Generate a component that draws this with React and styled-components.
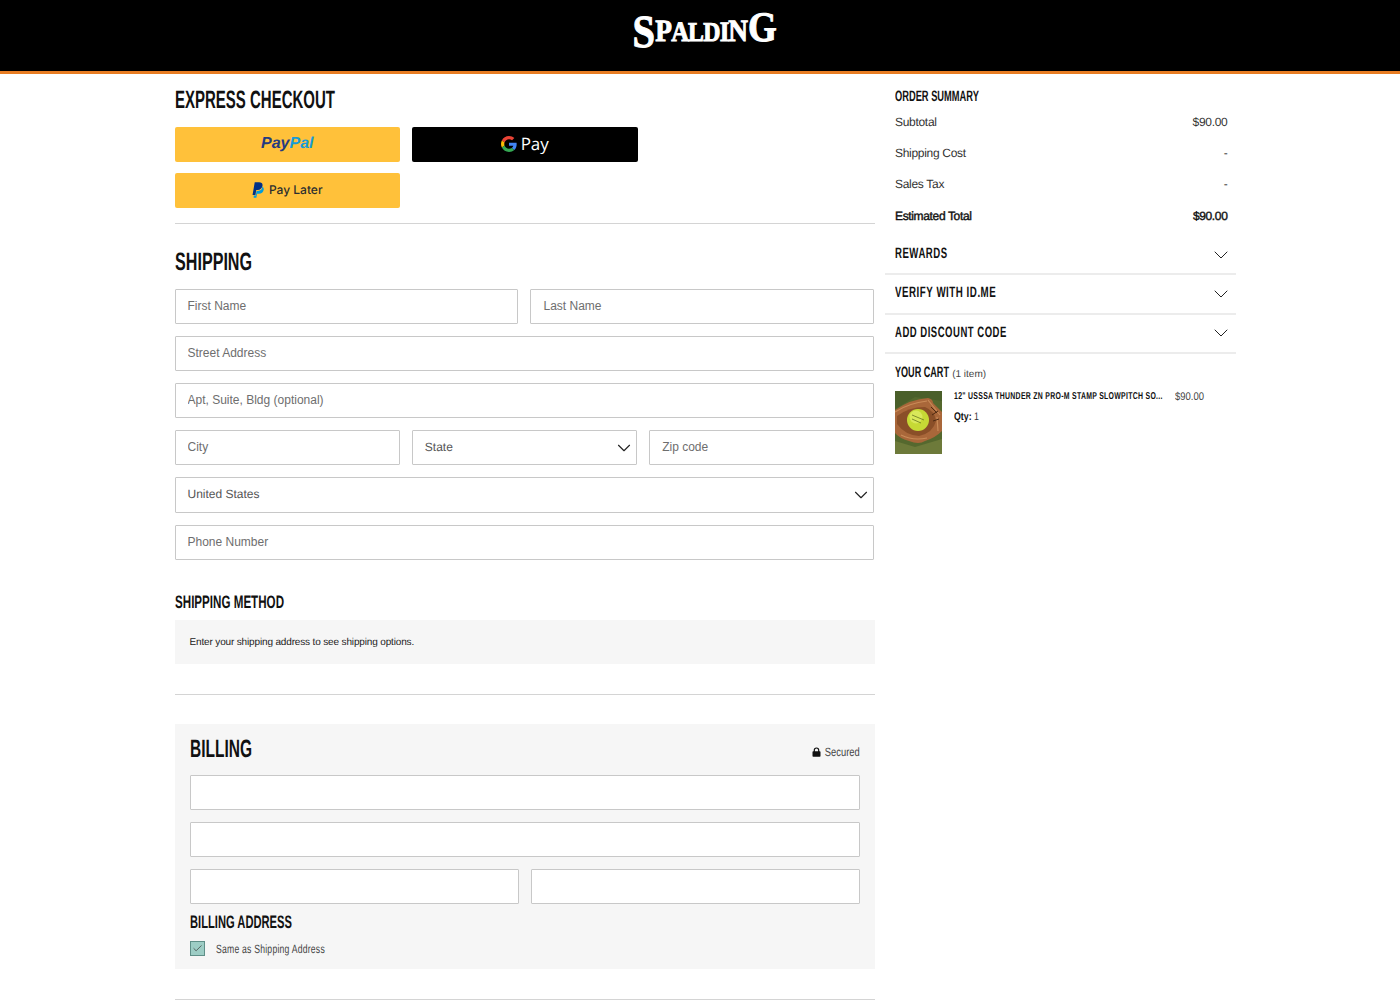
import React from 'react'
import styled, { createGlobalStyle } from 'styled-components'
import { ChevronDown, Check } from 'lucide-react'

const GlobalStyle = createGlobalStyle`
  * { box-sizing: border-box; }
  html, body { margin: 0; background: #fff; }
  body {
    font-family: "Liberation Sans", Arial, sans-serif;
    color: #333;
    overflow: hidden;
    height: 1000px;
    text-rendering: geometricPrecision;
  }
`

function GoogleG() {
    return (
        <svg width="16" height="16" viewBox="0 0 48 48">
            <path fill="#EA4335" d="M24 9.5c3.5 0 6.700 1.200 9.200 3.600l6.900-6.900C35.900 2.400 30.500 0 24 0 14.600 0 6.500 5.400 2.600 13.200l8 6.200C12.500 13.700 17.800 9.500 24 9.500z" />
            <path fill="#4285F4" d="M47 24.500c0-1.600-.1-3.100-.4-4.500H24v9h13c-.6 3-2.300 5.500-4.800 7.200l7.700 6C44.400 38 47 31.800 47 24.500z" />
            <path fill="#FBBC05" d="M10.600 28.600c-.5-1.400-.8-3-.8-4.600s.3-3.200.8-4.600l-8-6.200C.9 16.500 0 20.100 0 24s.9 7.500 2.600 10.800l8-6.200z" />
            <path fill="#34A853" d="M24 48c6.500 0 11.900-2.100 15.900-5.800l-7.700-6c-2.200 1.400-4.900 2.300-8.200 2.300-6.200 0-11.500-4.200-13.400-9.900l-8 6.200C6.500 42.600 14.600 48 24 48z" />
        </svg>
    )
}

function PayPalMark() {
    return (
        <svg width="12" height="16" viewBox="0 0 22 28">
            <path fill="#009cde" d="M19 7c.4 4.800-2.800 9-8 9H8.400L7 24H3.200L3 28h5l1.200-7h3c5.300 0 8.700-3.200 9.300-8 .3-1.700-.6-4.100-2.500-6z" />
            <path fill="#003087" d="M5 0h8c4.600 0 7 2.300 6.200 6.400C18.300 11.500 15 14 10.500 14H7.800L6.300 23H1z" />
        </svg>
    )
}

function LockIcon() {
    return (
        <svg width="9" height="10" viewBox="0 0 9 10">
            <path fill="none" stroke="#111" strokeWidth="1.200" d="M2.300 5V3.200a2.200 2.200 0 0 1 4.400 0V5" />
            <rect x=".5" y="4.200" width="8" height="5.600" rx=".8" fill="#111" />
        </svg>
    )
}

function Softball() {
    return (
        <svg width="47" height="63" viewBox="0 0 47 63">
            <rect width="47" height="63" fill="#55682e" />
            <path fill="#4a5f2a" d="M0 0h47v10L20 6 0 18z" />
            <path fill="#6d7a3a" d="M0 50l20 6 27-8v15H0z" />
            <path fill="#a9673a" d="M0 19 Q16 8 33 7 Q38 8 38 12 L47 21 L47 40 Q40 47 30 50 Q24 54 14 50 Q4 47 0 42z" />
            <path fill="#8a4f28" d="M2 25 Q14 16 30 16 Q40 20 41 30 Q38 42 24 45 Q10 44 2 33z" />
            <path fill="none" stroke="#c98b58" strokeWidth="1.200" d="M0 21 Q14 12 32 10 M33 9 L45 24 M42 26 L43 40 M6 44 Q18 50 32 47" />
            <path fill="none" stroke="#4f2a12" strokeWidth="1" d="M36 16 L42 22 M37 24 L43 20 M38 30 L44 28" />
            <circle cx="23" cy="29" r="11" fill="#c6d935" />
            <circle cx="21" cy="26" r="6.500" fill="#d9e85a" />
            <path fill="none" stroke="#66731f" strokeWidth=".8" d="M17 24 L29 29 M17 28 L26 32" />
        </svg>
    )
}

function Field({ label }) {
    return <Input placeholder={label} />
}

function SelectField({ label, tall }) {
    return (
        <SelectBox $tall={tall}>
            <SelectLabel>{label}</SelectLabel>
            <ChevronDown size={22} strokeWidth={1.25} color="#222" />
        </SelectBox>
    )
}

function App() {
    return (
        <>
            <GlobalStyle />
            <Header>
                <Logo>
                    <LogoLetter $size={46} $drop={6}>S</LogoLetter>
                    <LogoLetter $size={31}>P</LogoLetter>
                    <LogoLetter $size={28}>A</LogoLetter>
                    <LogoLetter $size={27}>L</LogoLetter>
                    <LogoLetter $size={27}>D</LogoLetter>
                    <LogoLetter $size={28}>I</LogoLetter>
                    <LogoLetter $size={31}>N</LogoLetter>
                    <LogoLetter $size={42}>G</LogoLetter>
                </Logo>
            </Header>
            <Page>
                <Main>
                    <Title><Squeeze $x={0.6}>EXPRESS CHECKOUT</Squeeze></Title>
                    <ExpressGrid>
                        <PayButton><PayPalWord>Pay<span>Pal</span></PayPalWord></PayButton>
                        <PayButton $dark><GoogleG /><GPayWord>Pay</GPayWord></PayButton>
                        <PayButton $wide><PayPalMark /><LaterWord>Pay Later</LaterWord></PayButton>
                    </ExpressGrid>
                    <Rule />
                    <ShippingTitle><Squeeze $x={0.645}>SHIPPING</Squeeze></ShippingTitle>
                    <FormGrid>
                        <Cell $span={3}><Field label="First Name" /></Cell>
                        <Cell $span={3}><Field label="Last Name" /></Cell>
                        <Cell $span={6}><Field label="Street Address" /></Cell>
                        <Cell $span={6}><Field label="Apt, Suite, Bldg (optional)" /></Cell>
                        <Cell $span={2}><Field label="City" /></Cell>
                        <Cell $span={2}><SelectField label="State" /></Cell>
                        <Cell $span={2}><Field label="Zip code" /></Cell>
                        <Cell $span={6}><SelectField label="United States" tall /></Cell>
                        <Cell $span={6}><Field label="Phone Number" /></Cell>
                    </FormGrid>
                    <SubTitle><Squeeze $x={0.645}>SHIPPING METHOD</Squeeze></SubTitle>
                    <MethodBox>Enter your shipping address to see shipping options.</MethodBox>
                    <Rule $gap={30} />
                    <BillingCard>
                        <BillingHead>
                            <BillingTitle><Squeeze $x={0.62}>BILLING</Squeeze></BillingTitle>
                            <Secured><LockIcon /><SecuredText>Secured</SecuredText></Secured>
                        </BillingHead>
                        <FormGrid>
                            <Cell $span={6}><Input /></Cell>
                            <Cell $span={6}><Input /></Cell>
                            <Cell $span={3}><Input /></Cell>
                            <Cell $span={3}><Input /></Cell>
                        </FormGrid>
                        <BillingAddress><Squeeze $x={0.62}>BILLING ADDRESS</Squeeze></BillingAddress>
                        <CheckRow>
                            <CheckBox><Check size={11} strokeWidth={1.5} color="#333" /></CheckBox>
                            <CheckLabel><Squeeze $x={0.72}>Same as Shipping Address</Squeeze></CheckLabel>
                        </CheckRow>
                    </BillingCard>
                    <Rule $gap={30} />
                </Main>
                <Side>
                    <SummaryTitle><Squeeze $x={0.62}>ORDER SUMMARY</Squeeze></SummaryTitle>
                    <SummaryRow><span>Subtotal</span><span>$90.00</span></SummaryRow>
                    <SummaryRow><span>Shipping Cost</span><span>-</span></SummaryRow>
                    <SummaryRow><span>Sales Tax</span><span>-</span></SummaryRow>
                    <SummaryRow $total><span>Estimated Total</span><span>$90.00</span></SummaryRow>
                    <AccordionList>
                        <Accordion><Squeeze $x={0.64}>REWARDS</Squeeze><ChevronDown size={24} strokeWidth={1} color="#222" /></Accordion>
                        <Accordion><Squeeze $x={0.65}>VERIFY WITH ID.ME</Squeeze><ChevronDown size={24} strokeWidth={1} color="#222" /></Accordion>
                        <Accordion><Squeeze $x={0.635}>ADD DISCOUNT CODE</Squeeze><ChevronDown size={24} strokeWidth={1} color="#222" /></Accordion>
                    </AccordionList>
                    <CartTitle><CartSqueeze $x={0.605}>YOUR CART</CartSqueeze><small>(1 item)</small></CartTitle>
                    <CartItem>
                        <Softball />
                        <ItemBody>
                            <ItemName><Squeeze $x={0.69}>12" USSSA THUNDER ZN PRO-M STAMP SLOWPITCH SO...</Squeeze></ItemName>
                            <ItemQty><Squeeze $x={0.8}><b>Qty:</b> 1</Squeeze></ItemQty>
                        </ItemBody>
                        <ItemPrice><Squeeze $x={0.86}>$90.00</Squeeze></ItemPrice>
                    </CartItem>
                </Side>
            </Page>
        </>
    )
}

export default App


const Header = styled.header`
height: 74px;
background: #000;
border-bottom: 3px solid #e87d23;
display: flex;
justify-content: center;
align-items: flex-start;
padding-top: 8px;
padding-left: 10px;
`
const Logo = styled.div`
height: 36px;
display: flex;
align-items: baseline;
font-family: "Liberation Serif", serif;
font-weight: 700;
color: #fff;
-webkit-text-stroke: 1px #fff;
`
const LogoLetter = styled.span`
font-size: ${p => p.$size}px;
line-height: 36px;
display: inline-block;
transform: translateY(${p => p.$drop || 0}px) scaleX(.88);
margin: 0 -1.500px;
`
const Squeeze = styled.span`
display: inline-block;
white-space: nowrap;
transform: scaleX(${p => p.$x});
transform-origin: left center;
`
const Page = styled.div`
width: 1061.500px;
margin-left: 174.500px;
display: flex;
align-items: flex-start;
`
const Main = styled.main`
width: 700px;
flex-shrink: 0;
`
const Title = styled.h1`
margin: 0;
height: 53px;
padding-top: 12px;
font-weight: 700;
font-size: 25px;
line-height: 28px;
color: #111;
`
const ExpressGrid = styled.div`
display: grid;
grid-template-columns: 225.500px 225.500px;
column-gap: 12px;
row-gap: 11px;
`
const PayButton = styled.div`
height: 35px;
padding-bottom: 2px;
border-radius: 2px;
background: ${p => (p.$dark ? '#000' : '#ffc13a')};
display: flex;
justify-content: center;
align-items: center;
gap: ${p => (p.$wide ? '5px' : '4px')};
`
const PayPalWord = styled.span`
font-weight: 700;
font-style: italic;
font-size: 16px;
color: #253b80;
span { color: #179bd7; }
`
const GPayWord = styled.span`
font-family: "Open Sans", sans-serif;
font-size: 17px;
color: #fff;
`
const LaterWord = styled.span`
font-family: Inter, sans-serif;
font-weight: 500;
font-size: 12px;
color: #2c2e2f;
`
const Rule = styled.div`
height: 1px;
background: #d4d4d4;
margin-top: ${p => p.$gap || 15}px;
`
const ShippingTitle = styled.h2`
margin: 0;
height: 65px;
padding-top: 24px;
font-weight: 700;
font-size: 25px;
line-height: 28px;
color: #111;
`
const FormGrid = styled.div`
display: grid;
grid-template-columns: repeat(6, 1fr);
gap: 12px;
`
const Cell = styled.div`
grid-column: span ${p => p.$span};
min-width: 0;
`
const Input = styled.input`
display: block;
width: 100%;
height: 35px;
padding: 0 12px 2px;
border: 1px solid #c8c8c8;
border-radius: 1px;
background: #fff;
font-family: "Liberation Sans", sans-serif;
font-size: 12px;
color: #333;
&::placeholder { color: #6e6e6e; opacity: 1; }
`
const SelectBox = styled.div`
height: ${p => (p.$tall ? 36 : 35)}px;
padding: 0 1px 0 12px;
border: 1px solid #c8c8c8;
border-radius: 1px;
background: #fff;
display: flex;
justify-content: space-between;
align-items: center;
font-size: 12px;
color: #555;
`
const SelectLabel = styled.span`
margin-bottom: 2px;
`
const SubTitle = styled.h3`
margin: 0;
height: 60px;
padding-top: 31px;
font-weight: 700;
font-size: 18px;
line-height: 22px;
color: #111;
`
const MethodBox = styled.div`
height: 44px;
padding: 0 15px;
background: #f6f6f6;
display: flex;
align-items: center;
font-size: 10px;
letter-spacing: -.15px;
color: #222;
`
const BillingCard = styled.section`
margin-top: 29px;
height: 245px;
padding: 0 15px;
background: #f6f6f6;
`
const BillingHead = styled.div`
height: 51px;
padding-bottom: 2px;
display: flex;
justify-content: space-between;
align-items: center;
`
const BillingTitle = styled.h2`
margin: 0;
font-weight: 700;
font-size: 25px;
line-height: 28px;
color: #111;
`
const Secured = styled.div`
display: flex;
align-items: center;
gap: 3px;
margin-top: 7px;
`
const SecuredText = styled.span`
display: inline-block;
font-size: 12px;
color: #444;
transform: scaleX(.78);
transform-origin: right center;
margin-left: -9.500px;
`
const BillingAddress = styled.h3`
margin: 0;
height: 37px;
padding-top: 7px;
font-weight: 700;
font-size: 18px;
line-height: 22px;
color: #111;
`
const CheckRow = styled.div`
display: flex;
align-items: center;
gap: 11px;
`
const CheckBox = styled.div`
width: 15px;
height: 15px;
border: 1px solid #5f8f88;
background: #9dcdc5;
display: flex;
justify-content: center;
align-items: center;
`
const CheckLabel = styled.span`
font-size: 12px;
letter-spacing: .3px;
color: #444;
`
const Side = styled.aside`
width: 351px;
margin-left: 10.500px;
`
const SummaryTitle = styled.h3`
margin: 0;
height: 32px;
padding: 14px 10px 0;
font-weight: 700;
font-size: 15px;
line-height: 18px;
color: #111;
`
const SummaryRow = styled.div`
height: 31.300px;
padding: 0 8.500px 0 10px;
display: flex;
justify-content: space-between;
align-items: center;
font-size: 12px;
letter-spacing: ${p => (p.$total ? '-.35px' : '-.3px')};
color: ${p => (p.$total ? '#111' : '#333')};
-webkit-text-stroke: ${p => (p.$total ? '.4px #111' : '0')};
`
const AccordionList = styled.div`
margin-top: 5px;
`
const Accordion = styled.div`
height: 39.200px;
padding: 0 3px 2px 10px;
border-bottom: 2px solid #ececec;
display: flex;
justify-content: space-between;
align-items: center;
font-weight: 700;
font-size: 15px;
letter-spacing: .8px;
color: #111;
overflow: hidden;
svg { margin-top: 2px; }
`
const CartTitle = styled.h3`
margin: 0;
height: 37px;
padding: 9px 10px 0;
font-weight: 700;
font-size: 15px;
line-height: 20px;
color: #111;
small {
  font-weight: 400;
  font-size: 10px;
  color: #444;
  margin-left: 3px;
}
`
const CartSqueeze = styled(Squeeze)`
margin-right: -35px;
`
const CartItem = styled.div`
padding: 0 10px;
display: flex;
align-items: flex-start;
gap: 12px;
`
const ItemBody = styled.div`
width: 208.500px;
flex-shrink: 0;
`
const ItemName = styled.div`
font-weight: 700;
font-size: 10px;
letter-spacing: .43px;
line-height: 12px;
color: #111;
`
const ItemQty = styled.div`
margin-top: 8px;
font-size: 11px;
line-height: 13px;
color: #333;
b { color: #111; }
`
const ItemPrice = styled.div`
font-size: 11px;
line-height: 12px;
color: #444;
`
